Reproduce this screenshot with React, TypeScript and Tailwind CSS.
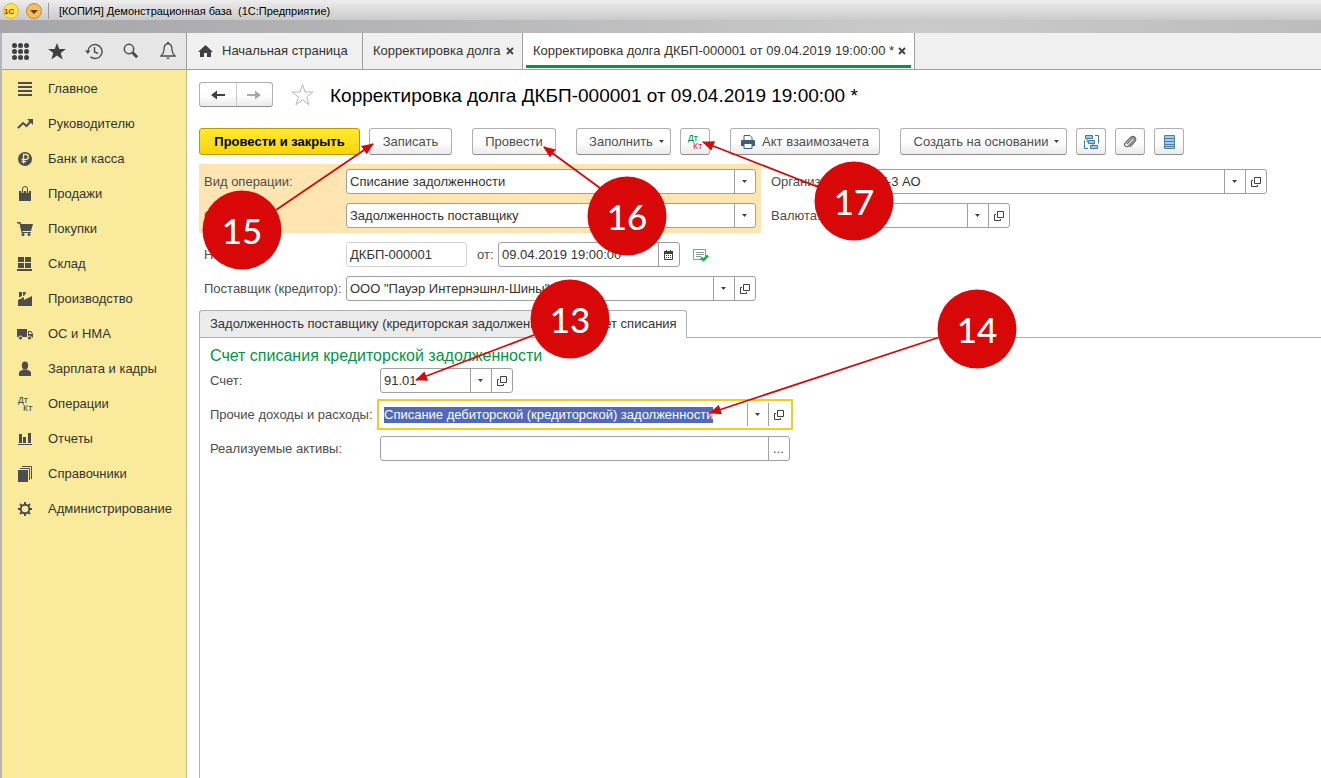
import { useEffect, useRef } from 'react';
import type { ReactNode, RefObject } from 'react';

interface FieldProps {
  id: string;
  value: string;
  className: string;
  children?: ReactNode;
  inputRef?: RefObject<HTMLInputElement | null>;
  focused?: boolean;
}

const menuItems = [
  { title: 'Главное', icon: <MainIcon /> },
  { title: 'Руководителю', icon: <TrendIcon /> },
  { title: 'Банк и касса', icon: <RubleIcon /> },
  { title: 'Продажи', icon: <BagIcon /> },
  { title: 'Покупки', icon: <CartIcon /> },
  { title: 'Склад', icon: <WarehouseIcon /> },
  { title: 'Производство', icon: <FactoryIcon /> },
  { title: 'ОС и НМА', icon: <TruckIcon /> },
  { title: 'Зарплата и кадры', icon: <PersonIcon /> },
  { title: 'Операции', icon: <DtKtIcon dt="#4d4d4d" kt="#4d4d4d" /> },
  { title: 'Отчеты', icon: <ChartIcon /> },
  { title: 'Справочники', icon: <BooksIcon /> },
  { title: 'Администрирование', icon: <GearIcon /> },
];

// Numbered steps: circle centre, where the arrow starts and where its tip is
const steps = [
  { label: '15', cx: 242, cy: 230, from: [276, 210], tip: [373, 144] },
  { label: '16', cx: 627, cy: 216, from: [600, 188], tip: [544, 147] },
  { label: '17', cx: 854, cy: 201, from: [818, 187], tip: [703, 142] },
  { label: '13', cx: 570, cy: 319, from: [534, 335], tip: [416, 380] },
  { label: '14', cx: 977, cy: 329, from: [940, 337], tip: [710, 413] },
];

function Icon({ children }: { children: ReactNode }) {
  return (
    <svg width="16" height="16" viewBox="0 0 16 16" fill="#4d4d4d" aria-hidden="true">
      {children}
    </svg>
  );
}

function MainIcon() {
  return <Icon><path d="M1 1h14v2H1zM1 5h14v2H1zM1 9h14v2H1zM1 13h14v2H1z" /></Icon>;
}

function TrendIcon() {
  return (
    <Icon>
      <path d="M1 12l5-5 3.500 3L14 5" fill="none" stroke="#4d4d4d" strokeWidth="2" />
      <path d="M10 3h6v6z" />
    </Icon>
  );
}

function RubleIcon() {
  return (
    <Icon>
      <circle cx="8" cy="8" r="7" />
      <path d="M6.500 12.500v-9h2.500a2.300 2.300 0 0 1 0 4.800H4.500M4.500 10.500h4.500" fill="none" stroke="#faeb9c" strokeWidth="1.300" />
    </Icon>
  );
}

function BagIcon() {
  return (
    <Icon>
      <path d="M2 5h12v10H2z" />
      <path d="M5.500 7V3.500a2.500 2.500 0 0 1 5 0V7" fill="none" stroke="#faeb9c" strokeWidth="2.600" />
      <path d="M5.500 7V3a2.300 2.300 0 0 1 5 0V7" fill="none" stroke="#4d4d4d" strokeWidth="1" />
    </Icon>
  );
}

function CartIcon() {
  return (
    <Icon>
      <path d="M0 1h3.500l.5 2h12l-2 7H5.200l.3 1H14v1H4.500L2.500 2.500H0z" />
      <circle cx="6" cy="13.500" r="1.500" />
      <circle cx="12" cy="13.500" r="1.500" />
    </Icon>
  );
}

function WarehouseIcon() {
  return <Icon><path d="M1 1h6v5H1zM8 1h6v5H8zM1 7h6v5H1zM8 7h6v5H8zM0 13h15v2H0z" /></Icon>;
}

function FactoryIcon() {
  return <Icon><path d="M1 9l6-3v3l8-4v10H1zM2 1h3v4L2 6.500zM6 1h3l-1 3-2 1z" /></Icon>;
}

function TruckIcon() {
  return (
    <Icon>
      <path d="M0 3h10v8H0zM11 5h3l2 3v3.500h-5zM12 6v2h3l-1.300-2z" fillRule="evenodd" />
      <circle cx="3.500" cy="12" r="2" stroke="#faeb9c" />
      <circle cx="12.500" cy="12" r="2" stroke="#faeb9c" />
    </Icon>
  );
}

function PersonIcon() {
  return (
    <Icon>
      <ellipse cx="8" cy="4.500" rx="3.200" ry="4" />
      <path d="M2 15v-3c0-2 2-2.500 4-3.500h4c2 1 4 1.500 4 3.500v3z" />
    </Icon>
  );
}

function ChartIcon() {
  return <Icon><path d="M2 3h3v9H2zM6 6h3v6H6zM11 2h3v10h-3zM1 13h14v1H1z" /></Icon>;
}

function BooksIcon() {
  return (
    <Icon>
      <path d="M1 4h10v12H1z" />
      <path d="M3 2.500h9.500V14M5 .5h9.500V13" fill="none" stroke="#4d4d4d" />
    </Icon>
  );
}

function GearIcon() {
  return (
    <Icon>
      <circle cx="8" cy="8" r="4.300" fill="none" stroke="#4d4d4d" strokeWidth="2" />
      <path
        d="M8 1v2.500M8 12.500V15M1 8h2.500M12.500 8H15M3 3l1.800 1.800M11.200 11.200L13 13M13 3l-1.800 1.800M4.800 11.200L3 13"
        stroke="#4d4d4d"
        strokeWidth="2"
      />
    </Icon>
  );
}

function DtKtIcon({ dt, kt }: { dt: string; kt: string }) {
  return (
    <svg width="18" height="18" viewBox="0 0 18 18" className="font-['Open_Sans',sans-serif] font-semibold" aria-hidden="true">
      <text x="2" y="8" fontSize="8" fill={dt}>Дт</text>
      <text x="7" y="16" fontSize="8" fill={kt}>Кт</text>
    </svg>
  );
}

function Caret() {
  return (
    <svg width="5" height="3" viewBox="0 0 5 3" fill="#404040" aria-hidden="true">
      <path d="M0 0h5L2.500 3z" />
    </svg>
  );
}

function OpenIcon() {
  return (
    <svg width="10" height="10" viewBox="0 0 10 10" fill="none" stroke="#404040" aria-hidden="true">
      <path d="M3.500.5h6v6h-6zM2 3.500H.5v6h6V8" />
    </svg>
  );
}

function Field({ id, value, className, children, inputRef, focused }: FieldProps) {
  return (
    <div
      className={`flex h-[25px] shrink-0 overflow-hidden border bg-white ${
        focused ? 'border-white outline-2 outline-offset-1 outline-[#f9c91e]' : 'rounded-[3px] border-[#a0a0a0]'
      } ${className}`}
    >
      <input
        id={id}
        ref={inputRef}
        defaultValue={value}
        className="min-w-0 flex-1 px-[3px] text-[13px] text-[#333333] outline-none selection:bg-[#5068c0] selection:text-white"
      />
      {children}
    </div>
  );
}

function FieldButton({ label, children }: { label: string; children: ReactNode }) {
  return (
    <button
      type="button"
      aria-label={label}
      className="flex w-[21px] shrink-0 items-center justify-center border-l border-[#a0a0a0] pr-px"
    >
      {children}
    </button>
  );
}

function ToolButton({ label, className, children }: { label?: string; className: string; children: ReactNode }) {
  return (
    <button
      type="button"
      aria-label={label}
      className={`flex h-[27px] shrink-0 items-center justify-center rounded-[3px] border border-[#b0b0b0] border-b-[#8c8c8c] bg-linear-to-b from-white from-50% to-[#ebebeb] text-[#4d4d4d] ${className}`}
    >
      {children}
    </button>
  );
}

function TitleBar() {
  return (
    <div className="bg-linear-to-r from-[#a6a6aa] via-[#c9cac9] via-70% to-[#bcbcbc]">
      <div className="flex h-[20px] items-center bg-linear-to-b from-[#ededed] to-[#cacaca] pt-[2px]">
        <svg width="48" height="18" viewBox="0 2 48 18" aria-hidden="true">
          <circle cx="11" cy="11" r="7.500" fill="#fde24a" stroke="#d9b84a" />
          <text x="4" y="14" fontSize="8" fontWeight="bold" fill="#d8141c">1С</text>
          <circle cx="34" cy="11" r="7.500" fill="#f8bd55" stroke="#b5894a" />
          <path d="M30 10h8l-4 4z" fill="#5c4220" />
        </svg>
        <div className="h-[16px] border-l border-[#999999]" />
        <h1 className="pl-[10px] text-[11px] whitespace-pre text-black">
          {'[КОПИЯ] Демонстрационная база  (1С:Предприятие)'}
        </h1>
      </div>
      <div className="h-[13px]" />
    </div>
  );
}

function QuickTools() {
  return (
    <div className="flex h-[37px] w-[185px] shrink-0 items-center border-r border-b border-[#a0a0a0] bg-[#e6e6e6]">
      <button type="button" aria-label="Меню функций" className="flex w-[37px] justify-center">
        <svg width="17" height="17" viewBox="0 0 17 17" fill="#404040">
          {[2.5, 8.5, 14.5].map((y) =>
            [2.5, 8.5, 14.5].map((x) => <circle key={`${x}-${y}`} cx={x} cy={y} r="2.500" />)
          )}
        </svg>
      </button>
      <button type="button" aria-label="Избранное" className="flex w-[37px] justify-center">
        <svg width="18" height="17" viewBox="0 0 18 17" fill="#404040">
          <path d="M9 0l2.300 6H18l-5.300 4 2 6.500L9 12.600 3.300 16.500l2-6.500L0 6h6.700z" />
        </svg>
      </button>
      <button type="button" aria-label="История" className="flex w-[37px] justify-center">
        <svg width="18" height="17" viewBox="0 0 18 17" fill="none" stroke="#4d4d4d" strokeWidth="1.400">
          <path d="M3 8.500a7 7 0 1 1 2.500 5.400M9.500 4v5l3.500 1.500" />
          <path d="M0 7.500h5.500L2.800 11z" fill="#4d4d4d" stroke="none" />
        </svg>
      </button>
      <button type="button" aria-label="Поиск" className="flex w-[37px] justify-center">
        <svg width="16" height="16" viewBox="0 0 16 16" fill="none" stroke="#4d4d4d">
          <circle cx="6" cy="6" r="4.700" strokeWidth="1.500" />
          <path d="M9.500 9.500l4.700 4.700" strokeWidth="3" />
        </svg>
      </button>
      <button type="button" aria-label="Уведомления" className="flex w-[37px] justify-center">
        <svg width="16" height="18" viewBox="0 0 16 18" fill="none" stroke="#4d4d4d" strokeWidth="1.300">
          <path d="M8 1.500C4.500 2 4 5 4 7.500c0 3-1 4.500-3 6.500h14c-2-2-3-3.500-3-6.500C12 5 11.500 2 8 1.500z" />
          <path d="M6 15.500h4l-2 2z" fill="#4d4d4d" stroke="none" />
          <path d="M8 0v2" strokeWidth="2" />
        </svg>
      </button>
    </div>
  );
}

function CloseIcon() {
  return (
    <svg width="8" height="8" viewBox="0 0 8 8" stroke="#404040" strokeWidth="1.800" aria-hidden="true">
      <path d="M1 1l6 6M7 1L1 7" />
    </svg>
  );
}

function WindowTabs() {
  return (
    <div className="flex h-[37px] min-w-0 flex-1 border-b border-[#a0a0a0] bg-[#f0f0f0]">
      <div className="flex w-[176px] shrink-0 items-center border-r border-[#a0a0a0] pl-[11px]">
        <svg width="15" height="12" viewBox="0 0 15 12" fill="#404040" aria-hidden="true">
          <path d="M7.500 0L15 7h-2v5H9V8H6v4H2V7H0z" />
        </svg>
        <button type="button" className="pl-[9px]">Начальная страница</button>
      </div>
      <div className="flex w-[160px] shrink-0 items-center justify-between border-r border-[#a0a0a0] pr-[8px] pl-[10px]">
        <button type="button">Корректировка долга</button>
        <button type="button" aria-label="Закрыть"><CloseIcon /></button>
      </div>
      <div className="flex w-[392px] shrink-0 border-r border-[#a0a0a0] bg-white px-[3px] pb-px">
        <div className="flex flex-1 items-center justify-between border-b-3 border-[#009646] pt-[4px] pr-[5px] pl-[7px]">
          <button type="button">Корректировка долга ДКБП-000001 от 09.04.2019 19:00:00 *</button>
          <button type="button" aria-label="Закрыть"><CloseIcon /></button>
        </div>
      </div>
    </div>
  );
}

function Sidebar() {
  return (
    <nav className="w-[185px] shrink-0 border-r border-[#c8bc7c] bg-[#faeb9c] pt-px">
      {menuItems.map((item) => (
        <a key={item.title} href="#" className="flex h-[35px] items-center text-[#333333]">
          <span className="flex w-[46px] justify-center">{item.icon}</span>
          {item.title}
        </a>
      ))}
    </nav>
  );
}

function Toolbar() {
  return (
    <div className="flex pt-[21px]">
      <button
        type="button"
        className="h-[27px] w-[161px] shrink-0 rounded-[3px] border border-[#b39b00] bg-linear-to-b from-[#ffe92e] to-[#fbd500] font-bold text-black"
      >
        Провести и закрыть
      </button>
      <ToolButton className="ml-[9px] w-[83px]">Записать</ToolButton>
      <ToolButton className="ml-[20px] w-[84px]">Провести</ToolButton>
      <ToolButton className="ml-[20px] w-[95px] gap-[6px] pl-[6px]">Заполнить <Caret /></ToolButton>
      <ToolButton label="Дт/Кт" className="ml-[9px] w-[30px]"><DtKtIcon dt="#009646" kt="#d9363e" /></ToolButton>
      <ToolButton className="ml-[20px] w-[150px] gap-[7px]">
        <svg width="14" height="14" viewBox="0 0 14 14" aria-hidden="true">
          <path d="M3 5V.5h6l2 2V5" fill="#fff" stroke="#3c5f80" />
          <path d="M1 5h12a1 1 0 0 1 1 1v5H0V6a1 1 0 0 1 1-1z" fill="#3c5f80" />
          <path d="M3 8.500h8v5H3z" fill="#fff" stroke="#3c5f80" />
        </svg>
        Акт взаимозачета
      </ToolButton>
      <ToolButton className="ml-[20px] w-[167px] gap-[6px] pl-[6px]">Создать на основании <Caret /></ToolButton>
      <ToolButton label="Структура подчиненности" className="ml-[9px] w-[30px]">
        <svg width="15" height="14" viewBox="0 0 15 14" fill="none" stroke="#3f7ba8" aria-hidden="true">
          <path d="M1.500.5h7v3h-7zM4.500 5.500h6v3h-6zM6.500 10.500h7v3h-7z" fill="#a9cbe2" />
          <path d="M11 .5h3.500v8M.5 5.500v8H4M3 4v3h2M9 9v2" />
        </svg>
      </ToolButton>
      <ToolButton label="Присоединенные файлы" className="ml-[9px] w-[30px]">
        <svg width="14" height="14" viewBox="0 0 14 14" fill="none" stroke="#666666" strokeWidth="1.200" aria-hidden="true">
          <path d="M4 9l5-5.500a1.200 1.200 0 0 1 1.900 1.600L5.500 11a2.200 2.200 0 0 1-3.300-3L8 2a3 3 0 0 1 4.300 4L7 12" />
        </svg>
      </ToolButton>
      <ToolButton label="Список" className="ml-[9px] w-[30px]">
        <svg width="11" height="14" viewBox="0 0 11 14" aria-hidden="true">
          <path d="M.5.500h10v13H.5z" fill="#a9cbe2" stroke="#4d7ea3" />
          <path d="M1 3.500h9M1 6.500h9M1 9.500h9M1 11.500h9" stroke="#4d7ea3" />
        </svg>
      </ToolButton>
    </div>
  );
}

function DocumentForm() {
  return (
    <div className="pt-[9px] text-[#4d4d4d]">
      <div className="flex gap-[10px]">
        <div className="flex w-[562px] shrink-0 flex-col gap-[9px] bg-[#ffe5b2] p-[5px]">
          <div className="flex items-center">
            <label htmlFor="operation" className="w-[142px]">Вид операции:</label>
            <Field id="operation" value="Списание задолженности" className="w-[410px]">
              <FieldButton label="Выбрать"><Caret /></FieldButton>
            </Field>
          </div>
          <div className="flex items-center">
            <label htmlFor="writeOff" className="w-[142px]">Списать:</label>
            <Field id="writeOff" value="Задолженность поставщику" className="w-[410px]">
              <FieldButton label="Выбрать"><Caret /></FieldButton>
            </Field>
          </div>
        </div>
        <div className="flex flex-col gap-[9px] py-[5px]">
          <div className="flex items-center">
            <label htmlFor="organization" className="w-[87px]">Организация:</label>
            <Field id="organization" value="КПТ-3 АО" className="w-[409px]">
              <FieldButton label="Выбрать"><Caret /></FieldButton>
              <FieldButton label="Открыть"><OpenIcon /></FieldButton>
            </Field>
          </div>
          <div className="flex items-center">
            <label htmlFor="currency" className="w-[87px]">Валюта:</label>
            <Field id="currency" value="руб." className="w-[152px]">
              <FieldButton label="Выбрать"><Caret /></FieldButton>
              <FieldButton label="Открыть"><OpenIcon /></FieldButton>
            </Field>
          </div>
        </div>
      </div>
      <div className="flex items-center pt-[9px] pl-[5px]">
        <label htmlFor="number" className="w-[142px]">Номер:</label>
        <input
          id="number"
          defaultValue="ДКБП-000001"
          className="h-[25px] w-[121px] rounded-[3px] border border-[#d4d4d4] px-[3px] text-[#333333]"
        />
        <label htmlFor="date" className="w-[31px] pl-[10px]">от:</label>
        <Field id="date" value="09.04.2019 19:00:00" className="w-[182px]">
          <FieldButton label="Календарь">
            <svg width="9" height="10" viewBox="0 0 9 10" aria-hidden="true">
              <path d="M.5 1.500h8v8h-8z" fill="#fff" stroke="#404040" />
              <path d="M0 1h9v3H0zM2 0h1v1H2zM6 0h1v1H6zM2 5h1v1H2zM4 5h1v1H4zM6 5h1v1H6zM2 7h1v1H2zM4 7h1v1H4zM6 7h1v1H6z" fill="#404040" />
            </svg>
          </FieldButton>
        </Field>
        <svg width="16" height="14" viewBox="0 0 16 14" className="ml-[13px]" aria-hidden="true">
          <path d="M.5 1.500h12v10H.5z" fill="#fff" stroke="#8799a8" />
          <path d="M3 4.500h8M3 6.500h8M3 8.500h5" stroke="#8799a8" />
          <path d="M8 9.500l2.500 2.500L15 7.500" fill="none" stroke="#22b14c" strokeWidth="2.500" />
        </svg>
      </div>
      <div className="flex items-center pt-[9px] pl-[5px]">
        <label htmlFor="supplier" className="w-[142px]">Поставщик (кредитор):</label>
        <Field id="supplier" value={'ООО "Пауэр Интернэшнл-Шины"'} className="w-[410px]">
          <FieldButton label="Выбрать"><Caret /></FieldButton>
          <FieldButton label="Открыть"><OpenIcon /></FieldButton>
        </Field>
      </div>
    </div>
  );
}

function AccountPanel() {
  const incomeRef = useRef<HTMLInputElement>(null);

  useEffect(() => {
    incomeRef.current?.focus();
    incomeRef.current?.select();
  }, []);

  return (
    <div className="flex flex-1 flex-col pt-[9px]">
      <div role="tablist" className="flex h-[28px] shrink-0 border-b border-[#b0b0b0] text-[#333333]">
        <button
          type="button"
          role="tab"
          aria-selected="false"
          className="h-[27px] rounded-tl-[3px] border-t border-l border-[#b0b0b0] bg-[#ebebeb] px-[10px]"
        >
          Задолженность поставщику (кредиторская задолженность)
        </button>
        <button
          type="button"
          role="tab"
          aria-selected="true"
          className="h-[28px] rounded-tr-[3px] border border-b-0 border-[#b0b0b0] bg-white px-[9px] pb-px"
        >
          Счет списания
        </button>
      </div>
      <div className="flex flex-1 flex-col gap-[9px] border-l border-[#b0b0b0] pt-[8px] pl-[10px] text-[#4d4d4d]">
        <div>
          <h3 className="pb-[2px] text-[16px] leading-[20px] text-[#009646]">Счет списания кредиторской задолженности</h3>
          <div className="flex items-center">
            <label htmlFor="account" className="w-[170px]">Счет:</label>
            <Field id="account" value="91.01" className="w-[133px]">
              <FieldButton label="Выбрать"><Caret /></FieldButton>
              <FieldButton label="Открыть"><OpenIcon /></FieldButton>
            </Field>
          </div>
        </div>
        <div className="flex items-center">
          <label htmlFor="income" className="w-[170px]">Прочие доходы и расходы:</label>
          <Field
            id="income"
            value="Списание дебиторской (кредиторской) задолженности"
            className="w-[410px]"
            inputRef={incomeRef}
            focused
          >
            <FieldButton label="Выбрать"><Caret /></FieldButton>
            <FieldButton label="Открыть"><OpenIcon /></FieldButton>
          </Field>
        </div>
        <div className="flex items-center">
          <label htmlFor="assets" className="w-[170px]">Реализуемые активы:</label>
          <Field id="assets" value="" className="w-[410px]">
            <FieldButton label="Выбрать из списка">...</FieldButton>
          </Field>
        </div>
      </div>
    </div>
  );
}

function StepMarkers() {
  return (
    <svg width="1060" height="400" className="pointer-events-none absolute top-0 left-0 overflow-visible">
      <defs>
        <marker id="tip" markerWidth="12" markerHeight="10" refX="11" refY="5" orient="auto" markerUnits="userSpaceOnUse">
          <path d="M0 0l12 5L0 10z" fill="#d90808" />
        </marker>
      </defs>
      {steps.map((step) => (
        <g key={step.label}>
          <line
            x1={step.from[0]}
            y1={step.from[1]}
            x2={step.tip[0]}
            y2={step.tip[1]}
            stroke="#d90808"
            strokeWidth="1.800"
            markerEnd="url(#tip)"
          />
          <circle cx={step.cx} cy={step.cy} r="39.500" fill="#d90808" />
          <text
            x={step.cx}
            y={step.cy + 14}
            textAnchor="middle"
            fontSize="35"
            fill="#fff"
            className="font-['Lato',sans-serif] font-medium"
          >
            {step.label}
          </text>
        </g>
      ))}
    </svg>
  );
}

export default function App() {
  return (
    <div className="relative flex min-h-screen flex-col overflow-hidden bg-white font-['Liberation_Sans',Arial,sans-serif] text-[13px] leading-[16px] text-[#333333]">
      <TitleBar />
      <div className="flex flex-1 flex-col border-l-2 border-[#b4b4bc]">
        <div className="flex">
          <QuickTools />
          <WindowTabs />
        </div>
        <div className="flex flex-1">
          <Sidebar />
          <main className="flex min-w-0 flex-1 flex-col pt-[12px] pl-[12px]">
            <div className="flex h-[25px] items-center">
              <div className="flex h-[25px] w-[74px] shrink-0 rounded-[3px] border border-[#b0b0b0] border-b-[#8c8c8c] bg-linear-to-b from-white from-50% to-[#ebebeb]">
                <button type="button" aria-label="Назад" className="flex flex-1 items-center justify-center border-r border-[#c8c8c8]">
                  <svg width="14" height="10" viewBox="0 0 14 10" fill="#404040">
                    <path d="M0 5l6-4.500V4h8v2H6v3.500z" />
                  </svg>
                </button>
                <button type="button" aria-label="Вперед" className="flex flex-1 items-center justify-center">
                  <svg width="14" height="10" viewBox="0 0 14 10" fill="#a8a8a8">
                    <path d="M14 5L8 .5V4H0v2h8v3.500z" />
                  </svg>
                </button>
              </div>
              <button type="button" aria-label="В избранное" className="ml-[18px]">
                <svg width="23" height="23" viewBox="0 0 23 23" fill="none" stroke="#b4b8bc">
                  <path d="M11.500 1.500l2.500 7.500h8l-6.400 5 2.400 7.700-6.500-4.700-6.500 4.700 2.400-7.700-6.400-5h8z" />
                </svg>
              </button>
              <h2 className="pt-[3px] pl-[16px] text-[19px] leading-[24px] whitespace-nowrap text-black">
                Корректировка долга ДКБП-000001 от 09.04.2019 19:00:00 *
              </h2>
            </div>
            <Toolbar />
            <DocumentForm />
            <AccountPanel />
          </main>
        </div>
      </div>
      <StepMarkers />
    </div>
  );
}
